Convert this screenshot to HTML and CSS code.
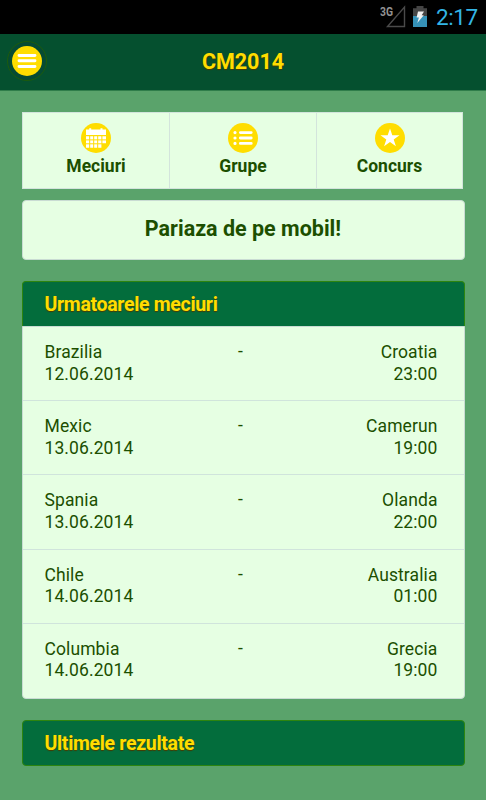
FILE: index.html
```
<!DOCTYPE html>
<html lang="ro">
<head>
  <meta charset="UTF-8">
  <meta name="viewport" content="width=device-width, initial-scale=1.0">
  <title>CM2014</title>
  <link rel="stylesheet" href="styles.css">
</head>

<body>
  <div class="statusbar">
    <svg class="signal" width="28" height="24" viewBox="0 0 28 24">
      <path d="M7.5 21.5 H24.5 V2 Z" fill="none" stroke="#4a4a4a" stroke-width="1.4"/>
      <text x="0" y="11" class="network" textLength="13" lengthAdjust="spacingAndGlyphs">3G</text>
    </svg>
    <svg class="battery" width="14" height="21" viewBox="0 0 14 21">
      <path d="M0 2.3h3.5V0h7v2.3H14V10H0z" fill="#454545"/>
      <path d="M0 10h14v11H0z" fill="#3692b8"/>
      <path d="M5 5.5h6L8.7 9.3h2.1L4.3 17l1.6-5.4H3.6z" fill="#f2f2f2"/>
    </svg>
    <span class="clock">2:17</span>
  </div>

  <header class="header">
    <a class="menu-button" href="#">
      <svg width="30" height="30" viewBox="0 0 30 30">
        <circle cx="15" cy="15" r="15" fill="#ffdd00"/>
        <path d="M7 9.5h16M7 14.7h16M7 20.5h16" stroke="#fff" stroke-width="2.9" stroke-linecap="round"/>
      </svg>
    </a>
    <h1>CM2014</h1>
  </header>

  <div class="content">
    <nav class="navbar">
      <a href="#">
        <svg width="30" height="30" viewBox="0 0 30 30">
          <circle cx="15" cy="15" r="15" fill="#ffdd00"/>
          <path d="M5 6.5h3.2v-1.3h2v1.3h9.3v-1.3h2v1.3H25V12H5z" fill="#fff"/>
          <path d="M5 13.2h20v7.5h-4v4H5z" fill="#fff"/>
          <path d="M5 16.9h20M5 20.8h20M8.7 13v12M12.7 13v12M16.7 13v12M20.9 13v12" stroke="#ffdd00" stroke-width="1"/>
        </svg>
        Meciuri
      </a>
      <a href="#">
        <svg width="30" height="30" viewBox="0 0 30 30">
          <circle cx="15" cy="15" r="15" fill="#ffdd00"/>
          <path d="M12.4 9.6h10.8M12.4 15h10.8M12.4 20.4h10.8" stroke="#fff" stroke-width="2.9" stroke-linecap="round"/>
          <path d="M7 9.6h.01M7 15h.01M7 20.4h.01" stroke="#fff" stroke-width="3.2" stroke-linecap="round"/>
        </svg>
        Grupe
      </a>
      <a href="#">
        <svg width="30" height="30" viewBox="0 0 30 30">
          <circle cx="15" cy="15" r="15" fill="#ffdd00"/>
          <path d="M15 5.5l2.3 6.8h7.2l-5.8 4.2 2.2 6.7-5.9-4.1-5.9 4.1 2.2-6.7-5.8-4.2h7.2z" fill="#fff"/>
        </svg>
        Concurs
      </a>
    </nav>

    <a class="button" href="#">Pariaza de pe mobil!</a>

    <section class="panel">
      <h2>Urmatoarele meciuri</h2>
      <ul class="matches">
        <li>
          <div>Brazilia<br>12.06.2014</div>
          <span>-</span>
          <div class="right">Croatia<br>23:00</div>
        </li>
        <li>
          <div>Mexic<br>13.06.2014</div>
          <span>-</span>
          <div class="right">Camerun<br>19:00</div>
        </li>
        <li>
          <div>Spania<br>13.06.2014</div>
          <span>-</span>
          <div class="right">Olanda<br>22:00</div>
        </li>
        <li>
          <div>Chile<br>14.06.2014</div>
          <span>-</span>
          <div class="right">Australia<br>01:00</div>
        </li>
        <li>
          <div>Columbia<br>14.06.2014</div>
          <span>-</span>
          <div class="right">Grecia<br>19:00</div>
        </li>
      </ul>
    </section>

    <section class="panel closed">
      <h2>Ultimele rezultate</h2>
    </section>
  </div>
</body>
</html>
```
FILE: styles.css
```
* {
  box-sizing: border-box;
}

body {
  margin: 0;
  height: 800px;
  overflow: hidden;
  background-color: #5aa36b;
  font-family: Roboto, "Liberation Sans", sans-serif;
  color: #1c4f00;
}

a {
  color: inherit;
  text-decoration: none;
}

/* Status bar */
.statusbar {
  display: flex;
  height: 34px;
  background-color: #000;
}

.signal {
  margin: 5px 0 0 auto;
}

.network {
  font-size: 12.5px;
  font-weight: bold;
  fill: #929292;
}

.battery {
  margin: 6px 0 0 5px;
}

.clock {
  width: 42px;
  margin: 4px 8px 0 9px;
  font-size: 22.5px;
  line-height: 27px;
  letter-spacing: -0.4px;
  color: #33b5e5;
  white-space: nowrap;
}

/* Header */
.header {
  display: grid;
  grid-template-columns: 54px 1fr 54px;
  align-items: center;
  height: 57px;
  background-color: #05502f;
  border-bottom: 1px solid #2f7d4a;
}

.menu-button {
  display: flex;
  align-items: center;
  justify-content: center;
  width: 40px;
  height: 40px;
  margin: -2px 0 0 7px;
  border: 1px solid #1d5c0c;
  border-radius: 50%;
  background-color: #064b33;
}

.header h1 {
  margin: 0 0 2px;
  font-size: 21.5px;
  text-align: center;
  color: #ffdd00;
  text-shadow: 0 1px 1px #4a3a00;
}

.content {
  padding: 21px 21px 0 22px;
}

/* Navbar */
.navbar {
  display: grid;
  grid-template-columns: 147px 147px 145px;
  height: 77px;
  width: 441px;
  background-color: #e6ffe3;
  border: 1px solid #d3e4dc;
}

.navbar a {
  display: flex;
  flex-direction: column;
  align-items: center;
  padding-top: 10px;
  border-right: 1px solid #d3e4dc;
  font-size: 17.5px;
  font-weight: bold;
  line-height: 26px;
}

.navbar a:last-child {
  border-right: none;
}

/* Button */
.button {
  display: block;
  height: 60px;
  margin-top: 11px;
  padding-right: 1px;
  border: 1px solid #c9dcd3;
  border-radius: 4px;
  background-color: #e6ffe3;
  font-size: 21.5px;
  font-weight: bold;
  line-height: 56px;
  text-align: center;
}

/* Panels */
.panel {
  margin-top: 21px;
}

.panel h2 {
  height: 45px;
  margin: 0;
  padding-left: 21.5px;
  border: 1px solid #2d850f;
  border-bottom: none;
  border-radius: 4px 4px 0 0;
  background-color: #036d3c;
  font-size: 19.5px;
  line-height: 45px;
  letter-spacing: -0.32px;
  color: #ffdd00;
  text-shadow: 0 1px 1px #4a3a00;
}

.closed h2 {
  height: 46px;
  border-bottom: 1px solid #2d850f;
  border-radius: 4px;
}

.matches {
  display: grid;
  grid-template-rows: repeat(5, 1fr);
  height: 373px;
  margin: 0;
  padding: 0;
  border: 1px solid #c9dcd3;
  border-radius: 0 0 4px 4px;
  background-color: #e6ffe3;
  list-style: none;
}

.matches li {
  display: grid;
  grid-template-columns: 1fr 6px 1fr;
  padding: 15px 26.5px 0 21.5px;
  border-bottom: 1px solid #d0e4dc;
  font-size: 17.5px;
  line-height: 21.5px;
  letter-spacing: 0.1px;
}

.matches li:last-child {
  border-bottom: none;
}

.matches span {
  line-height: 19px;
}

.right {
  text-align: right;
}
```
